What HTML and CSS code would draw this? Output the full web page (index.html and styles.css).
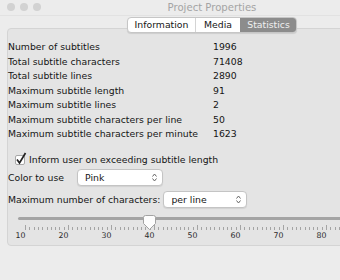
FILE: index.html
```html
<!DOCTYPE html>
<html lang="en">
  <head>
    <meta name="viewport" content="width=device-width, initial-scale=1.0" />
    <title>Project Properties</title>
    <link rel="stylesheet" href="styles.css">
  </head>
  <body>
    <div class="window">
      <div class="titlebar">
        <div class="lights">
          <span class="light"></span>
          <span class="light"></span>
          <span class="light"></span>
        </div>
        <div class="title">Project Properties</div>
      </div>

      <div class="tabs">
        <div class="tab info-tab">Information</div>
        <div class="tab media-tab">Media</div>
        <div class="tab selected">Statistics</div>
      </div>

      <div class="group">
        <div class="stats">
          <span>Number of subtitles</span><span>1996</span>
          <span>Total subtitle characters</span><span>71408</span>
          <span>Total subtitle lines</span><span>2890</span>
          <span>Maximum subtitle length</span><span>91</span>
          <span>Maximum subtitle lines</span><span>2</span>
          <span>Maximum subtitle characters per line</span><span>50</span>
          <span>Maximum subtitle characters per minute</span><span>1623</span>
        </div>

        <label class="check">
          <span class="box">
            <svg width="12" height="13" viewBox="0 0 12 13">
              <path d="M2 7.5 L4.5 11 L10.5 1" fill="none" stroke="#222" stroke-width="1.7" />
            </svg>
          </span>
          Inform user on exceeding subtitle length
        </label>

        <div class="field">
          <span class="field-label color-label">Color to use</span>
          <div class="popup color-popup">Pink
            <svg class="arrows" width="5" height="9" viewBox="0 0 5 9">
              <path d="M0.5 3.5 L2.5 1 L4.5 3.5 M0.5 5.5 L2.5 8 L4.5 5.5" fill="none" stroke="#666" stroke-width="1" />
            </svg>
          </div>
        </div>

        <div class="field">
          <span class="field-label">Maximum number of characters:</span>
          <div class="popup mode-popup">per line
            <svg class="arrows" width="5" height="9" viewBox="0 0 5 9">
              <path d="M0.5 3.5 L2.5 1 L4.5 3.5 M0.5 5.5 L2.5 8 L4.5 5.5" fill="none" stroke="#666" stroke-width="1" />
            </svg>
          </div>
        </div>

        <div class="slider">
          <div class="track"></div>
          <svg class="thumb" width="13" height="15" viewBox="0 0 13 15">
            <path d="M2.5 0.5 H10.5 Q12.5 0.5 12.5 2.5 V8.5 L6.5 14.5 L0.5 8.5 V2.5 Q0.5 0.5 2.5 0.5 Z" fill="#fdfdfd" stroke="#a2a2a2" />
          </svg>
          <svg class="ticks" width="400" height="6" viewBox="0 0 400 6" id="ticks"></svg>
          <div class="labels">
            <span>10</span><span>20</span><span>30</span><span>40</span>
            <span>50</span><span>60</span><span>70</span><span>80</span>
          </div>
        </div>
      </div>
    </div>

    <script>
      // tick marks: one per unit, taller every ten
      var svg = document.getElementById("ticks");
      var marks = "";
      for (var i = 0; i <= 90; i++) {
        var x = Math.round(11 + i * 4.3) + 0.5;
        var h = i % 10 === 0 ? 5 : 3;
        marks += '<line x1="' + x + '" y1="' + (6 - h) + '" x2="' + x + '" y2="6" stroke="#a4a4a4" stroke-width="1" />';
      }
      svg.innerHTML = marks;
    </script>
  </body>
</html>
```

FILE: styles.css
```css
* {
  padding: 0;
  margin: 0;
  box-sizing: border-box;
}
body {
  background-color: #ececec;
  overflow: hidden;
  font-family: "DejaVu Sans", Verdana, sans-serif;
  font-size: 9.3px;
  color: #151515;
}
.window {
  width: 424px;
  height: 280px;
  background-color: #ececec;
}
.titlebar {
  height: 16px;
  position: relative;
  display: flex;
  align-items: center;
  justify-content: center;
  border-bottom: 1px solid #e2e2e2;
}
.lights {
  position: absolute;
  left: 7px;
  top: 3px;
  display: flex;
  gap: 5px;
}
.light {
  width: 8px;
  height: 8px;
  border-radius: 50%;
  background-color: #d2d2d2;
}
.title {
  font-size: 10.1px;
  color: #a4a4a4;
}
.tabs {
  display: flex;
  margin: 1px auto -5px;
  width: 170px;
  position: relative;
  z-index: 1;
  border: 1px solid #c6c6c6;
  border-radius: 4px;
  background-color: #fff;
  box-shadow: 0 1px 1px rgba(0, 0, 0, 0.1);
  height: 16px;
  overflow: hidden;
}
.tab {
  line-height: 14px;
  text-align: center;
  color: #151515;
  border-left: 1px solid #d4d4d4;
}
.tab:first-child {
  border-left: none;
}
.info-tab {
  width: 67px;
}
.media-tab {
  width: 45px;
}
.tab.selected {
  flex: 1;
  background-color: #8c8c8c;
  color: #f0f0f0;
  border-left-color: #8c8c8c;
}
.group {
  margin: 0 7px;
  height: 218px;
  border: 1px solid #d4d4d4;
  border-radius: 4px;
  background-color: #e4e4e4;
  padding-top: 11px;
  position: relative;
}
.stats {
  display: grid;
  grid-template-columns: 205px auto;
  line-height: 14.5px;
  white-space: nowrap;
}
.check {
  display: flex;
  align-items: center;
  gap: 4px;
  margin: 11px 0 0 7px;
  height: 14px;
}
.box {
  width: 10px;
  height: 10px;
  border: 1px solid #a8a8a8;
  border-radius: 2px;
  background-color: #fff;
  position: relative;
}
.box svg {
  position: absolute;
  left: -1px;
  top: -4px;
}
.field {
  display: flex;
  align-items: center;
  gap: 3px;
  margin-top: 2px;
  height: 18px;
  white-space: nowrap;
}
.field + .field {
  margin-top: 4px;
}
.field-label {
  flex: none;
}
.color-label {
  width: 66px;
}
.popup {
  height: 17px;
  border: 1px solid #c4c4c4;
  border-radius: 4px;
  background-color: #fff;
  box-shadow: 0 1px 1px rgba(0, 0, 0, 0.08);
  display: flex;
  align-items: center;
  justify-content: space-between;
  padding: 0 5px 0 7px;
  flex: none;
}
.color-popup {
  width: 86px;
}
.mode-popup {
  width: 84px;
}
.slider {
  position: relative;
  margin-top: 8px;
  padding-left: 10px;
}
.track {
  height: 3px;
  border-radius: 2px;
  background-color: #a4a4a4;
  margin-top: 3px;
}
.thumb {
  position: absolute;
  left: 135px;
  top: -2px;
}
.ticks {
  display: block;
  margin-top: 4px;
  margin-left: -4px;
}
.labels {
  display: flex;
  margin-left: -19px;
  margin-top: 1px;
}
.labels span {
  width: 43px;
  text-align: center;
  font-size: 7.8px;
  color: #2a2a2a;
}
```
